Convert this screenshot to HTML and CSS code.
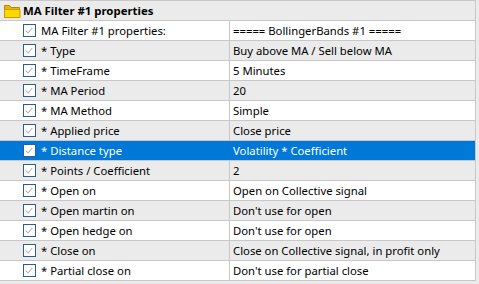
FILE: index.html
```html
<!DOCTYPE html>
<html lang="en">
<head>
    <meta charset="UTF-8">
    <title>MA Filter #1 properties</title>
    <link rel="stylesheet" href="styles.css">
</head>
<body>
    <div class="grid">
        <div class="group">
            <svg class="folder" width="17" height="14" viewBox="0 0 17 14">
                <path d="M0.5 1.5 h5 l1.5 2 h8.5 v10 h-15 z" fill="#e8b600" stroke="#b58a00"/>
                <path d="M0.5 5.5 h15.5 v8 h-15.5 z" fill="#ffd800" stroke="#c99a00"/>
            </svg>
            <span>MA Filter #1 properties</span>
        </div>
        <div class="row">
            <div class="name"><span class="check"></span>MA Filter #1 properties:</div>
            <div class="value">===== BollingerBands #1 =====</div>
        </div>
        <div class="row alt">
            <div class="name"><span class="check"></span>* Type</div>
            <div class="value">Buy above MA / Sell below MA</div>
        </div>
        <div class="row">
            <div class="name"><span class="check"></span>* TimeFrame</div>
            <div class="value">5 Minutes</div>
        </div>
        <div class="row alt">
            <div class="name"><span class="check"></span>* MA Period</div>
            <div class="value">20</div>
        </div>
        <div class="row">
            <div class="name"><span class="check"></span>* MA Method</div>
            <div class="value">Simple</div>
        </div>
        <div class="row alt">
            <div class="name"><span class="check"></span>* Applied price</div>
            <div class="value">Close price</div>
        </div>
        <div class="row selected">
            <div class="name"><span class="check"></span>* Distance type</div>
            <div class="value">Volatility * Coefficient</div>
        </div>
        <div class="row alt">
            <div class="name"><span class="check"></span>* Points / Coefficient</div>
            <div class="value">2</div>
        </div>
        <div class="row">
            <div class="name"><span class="check"></span>* Open on</div>
            <div class="value">Open on Collective signal</div>
        </div>
        <div class="row alt">
            <div class="name"><span class="check"></span>* Open martin on</div>
            <div class="value">Don't use for open</div>
        </div>
        <div class="row">
            <div class="name"><span class="check"></span>* Open hedge on</div>
            <div class="value">Don't use for open</div>
        </div>
        <div class="row alt">
            <div class="name"><span class="check"></span>* Close on</div>
            <div class="value">Close on Collective signal, in profit only</div>
        </div>
        <div class="row">
            <div class="name"><span class="check"></span>* Partial close on</div>
            <div class="value">Don't use for partial close</div>
        </div>
    </div>
</body>
</html>
```

FILE: styles.css
```css
body {
    margin: 0;
    background-color: #ebebeb;
    font-family: "Noto Sans", "Open Sans", sans-serif;
    font-size: 11.3px;
    color: #000;
}

.grid {
    width: 475px;
    border-top: 1px solid #c8c8c8;
    border-right: 1px solid #c8c8c8;
    border-bottom: 1px solid #c8c8c8;
}

.group {
    display: flex;
    align-items: center;
    height: 19px;
    border-bottom: 1px solid #c8c8c8;
    background-color: #ebebeb;
    font-weight: bold;
    font-size: 11.4px;
}

.folder {
    margin: 0 2px 0 4px;
}

.row {
    display: flex;
    height: 19px;
    border-bottom: 1px solid #c8c8c8;
    background-color: #fff;
}

.row:last-child {
    border-bottom: none;
}

.row.alt {
    background-color: #ebebeb;
}

.name {
    display: flex;
    align-items: center;
    width: 229px;
    border-right: 1px solid #c8c8c8;
    white-space: nowrap;
}

.value {
    display: flex;
    align-items: center;
    flex: 1;
    padding-left: 3px;
    white-space: nowrap;
}

.check {
    position: relative;
    box-sizing: border-box;
    width: 13px;
    height: 13px;
    margin: 0 5px 0 23px;
    border: 1px solid #2b5e8c;
    background-color: #fff;
}

.check::after {
    content: "";
    position: absolute;
    left: 3px;
    top: 1px;
    width: 3px;
    height: 6px;
    border-right: 1px solid #b4b4b4;
    border-bottom: 1px solid #b4b4b4;
    transform: rotate(40deg);
}

.row.selected {
    background-color: #0078d7;
    color: #fff;
}

.row.selected .name {
    border-right-color: #0078d7;
}
```
